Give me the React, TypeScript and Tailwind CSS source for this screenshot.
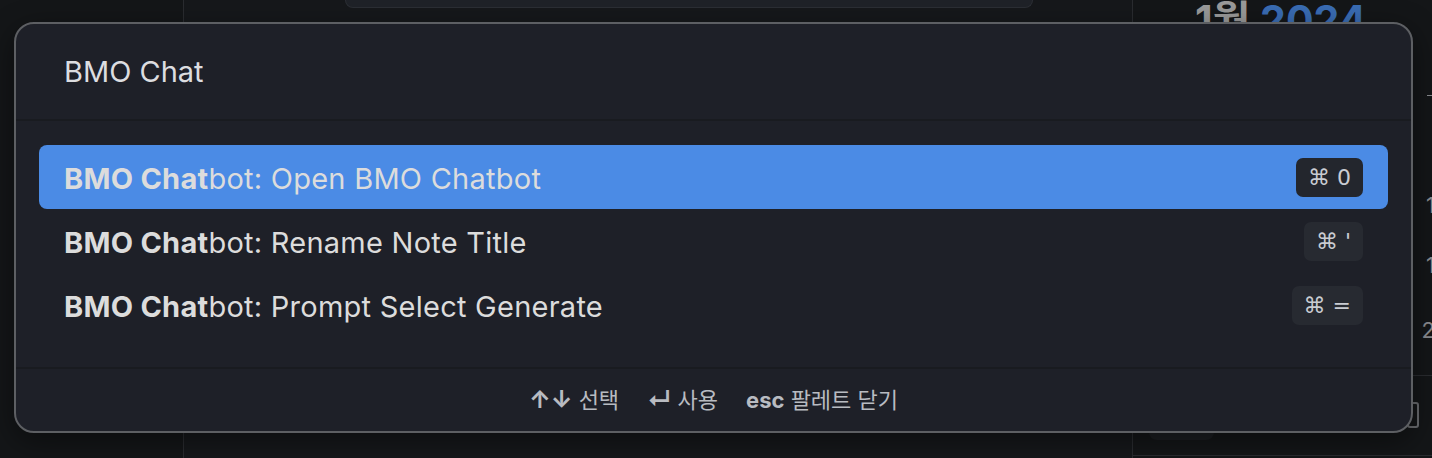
const commands = [
  { rest: "bot: Open BMO Chatbot", keys: "⌘ 0", selected: true },
  { rest: "bot: Rename Note Title", keys: "⌘ '", selected: false },
  { rest: "bot: Prompt Select Generate", keys: "⌘ =", selected: false },
];

const font = {
  fontFamily: 'Inter, "Noto Sans CJK KR", "DejaVu Sans", sans-serif',
};

const App = () => {
  return (
    <div
      className="relative flex h-[458px] w-[1432px] overflow-hidden bg-[#141619]"
      style={font}
    >
      {/* background app */}
      <div className="h-full w-[183px] bg-[#141618]" />
      <div className="h-full w-px bg-[#2a2c30]" />
      <div className="flex h-full flex-1 bg-[#16181b]">
        <div className="ml-[161px] h-[8px] w-[688px] rounded-b-[10px] border border-t-0 border-[#2c2f35] bg-[#1f2228]" />
      </div>
      <div className="h-full w-px bg-[#2a2c30]" />
      <div className="flex h-full w-[299px] flex-col bg-[#141618]">
        <div className="pl-[62px] text-[41px] leading-[40px] font-bold">
          <span className="text-[#9b9b9b]">1월 </span>
          <span className="text-[#3a6db5]">2024</span>
        </div>
        <div className="mr-[-3px] flex flex-col items-end text-[22px] leading-[26px] text-[#8a8c90]">
          <span className="mt-[55px] mr-[2px] h-px w-[6px] bg-[#8a8c90]" />
          <span className="mt-[96px]">1</span>
          <span className="mt-[34px]">1</span>
          <span className="mt-[39px]">2</span>
        </div>
        <div className="mt-[32px] h-px w-full bg-[#2a2c30]" />
        <div className="flex items-start justify-between">
          <div className="mt-[44px] ml-[16px] h-[20px] w-[65px] rounded-b-[8px] bg-[#1c1e22]" />
          <div className="mt-[26px] mr-[13px] h-[26px] w-[12px] rounded-[3px] border-2 border-[#6a6c70]" />
        </div>
        <div className="mt-auto mb-[2px] h-px w-full bg-[#2a2c30]" />
      </div>

      {/* command palette */}
      <div className="absolute top-[22px] left-[14px] flex h-[411px] w-[1399px] flex-col rounded-[20px] border-2 border-[#5d5f63] bg-[#1e2028] shadow-[0_8px_30px_rgba(0,0,0,0.45)]">
        <div className="flex h-[97px] items-center border-b-2 border-[#191b20] pl-[48px] text-[29px] text-[#dcdde0]">
          BMO Chat
        </div>
        <div className="flex flex-1 flex-col px-[23px] pt-[24px]">
          {commands.map((cmd) => (
            <div
              key={cmd.rest}
              className={
                cmd.selected
                  ? "flex h-[64px] items-center justify-between rounded-[8px] bg-[#4b8be5] px-[25px]"
                  : "flex h-[64px] items-center justify-between rounded-[8px] px-[25px]"
              }
            >
              <span className="pt-[3px] text-[29px] tracking-[0.25px] text-[#dcdcdc]">
                <span className="font-bold">BMO Chat</span>
                {cmd.rest}
              </span>
              <span
                className={
                  cmd.selected
                    ? "flex h-[39px] items-center rounded-[7px] bg-[#23262d] px-[12px] text-[22px] text-[#c9ccd2]"
                    : "flex h-[39px] items-center rounded-[7px] bg-[#272a31] px-[12px] text-[22px] text-[#c9ccd2]"
                }
                style={{ fontFamily: '"DejaVu Sans", sans-serif' }}
              >
                {cmd.keys}
              </span>
            </div>
          ))}
        </div>
        <div className="flex h-[64px] items-center justify-center gap-[28px] border-t-2 border-[#191b20] text-[22px] text-[#b8bbc1]">
          <span>
            <span className="text-[24px] font-bold">↑↓</span> 선택
          </span>
          <span>
            <span className="text-[24px] font-bold">↵</span> 사용
          </span>
          <span>
            <span className="font-bold">esc</span> 팔레트 닫기
          </span>
        </div>
      </div>
    </div>
  );
};

export default App;
